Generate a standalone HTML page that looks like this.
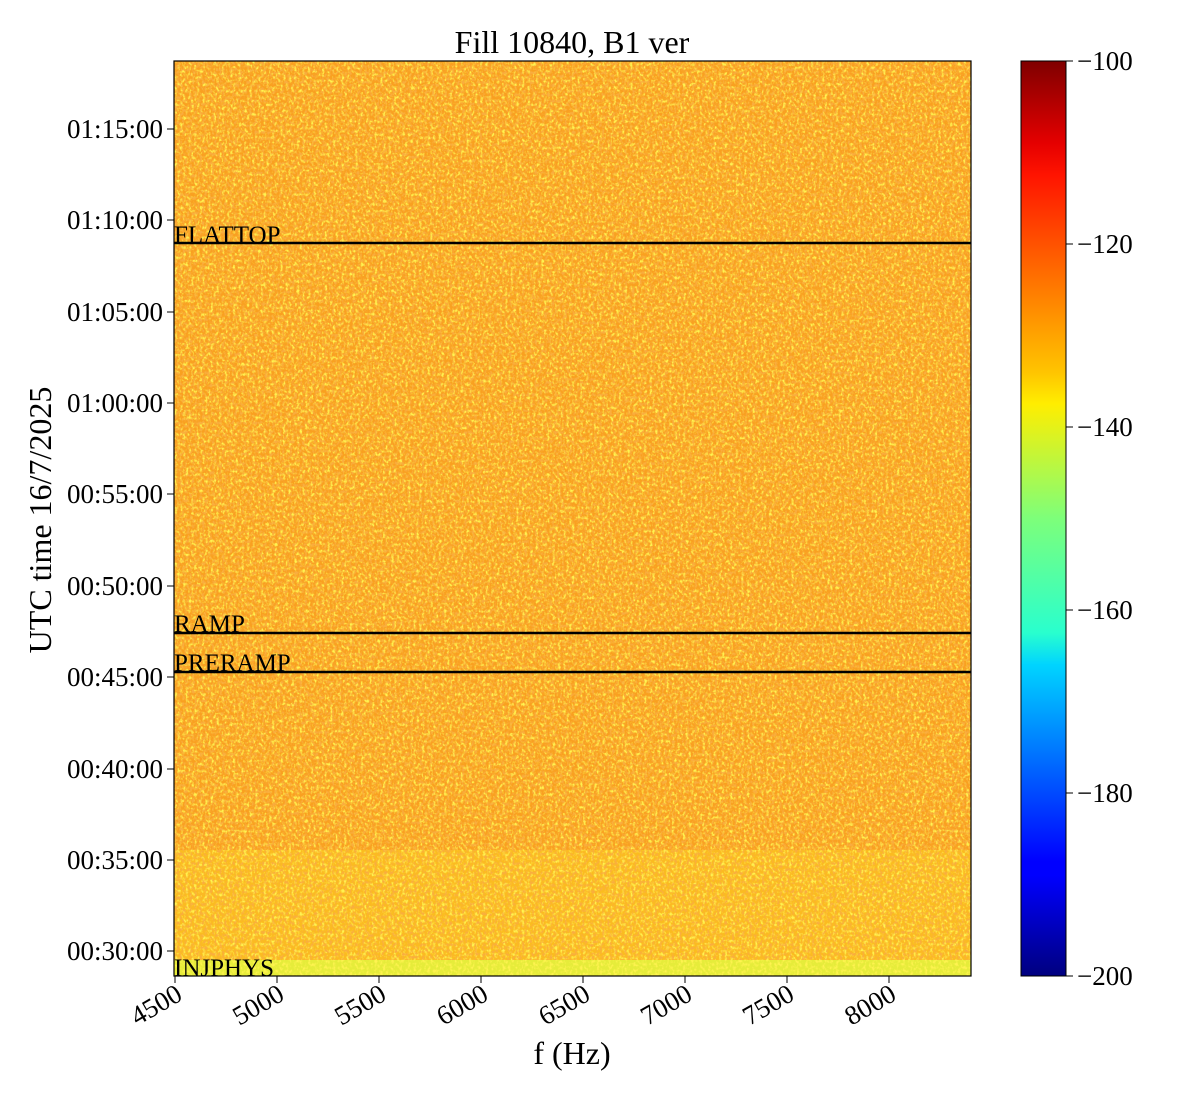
<!DOCTYPE html>
<html><head><meta charset="utf-8"><style>html,body{margin:0;padding:0;background:#fff}svg{display:block}</style></head>
<body>
<svg width="1200" height="1100" xmlns="http://www.w3.org/2000/svg" font-family="Liberation Serif, serif">
<defs>
<filter id="n" x="0" y="0" width="100%" height="100%">
<feTurbulence type="fractalNoise" baseFrequency="0.36 0.3" numOctaves="2" seed="3" result="t"/>
<feColorMatrix in="t" type="matrix" values="0 0 0 0 1  0 0 0 0 0.9  0 0 0 0 0.08  3.4 0 0 0 -1.55"/>
</filter>
<filter id="n2" x="0" y="0" width="100%" height="100%">
<feTurbulence type="fractalNoise" baseFrequency="0.4 0.32" numOctaves="2" seed="9" result="t"/>
<feColorMatrix in="t" type="matrix" values="0 0 0 0 0.95  0 0 0 0 0.42  0 0 0 0 0.05  0 3.6 0 0 -1.65"/>
</filter>
<linearGradient id="jet" x1="0" y1="1" x2="0" y2="0">
<stop offset="0" stop-color="#00007f"/><stop offset="0.11" stop-color="#0000ff"/>
<stop offset="0.125" stop-color="#0000ff"/><stop offset="0.34" stop-color="#00d4ff"/>
<stop offset="0.375" stop-color="#29ffce"/><stop offset="0.5" stop-color="#7dff7a"/>
<stop offset="0.625" stop-color="#ffee00"/><stop offset="0.66" stop-color="#ffc400"/>
<stop offset="0.75" stop-color="#ff7b00"/><stop offset="0.875" stop-color="#ff1400"/>
<stop offset="0.91" stop-color="#e50000"/><stop offset="1" stop-color="#7f0000"/>
</linearGradient>
</defs>
<text x="572" y="53" font-size="32" text-anchor="middle">Fill 10840, B1 ver</text>
<rect x="174" y="61" width="797" height="915" fill="#f9a020"/>
<rect x="174" y="850" width="797" height="110" fill="#fbbb20"/>
<rect x="174" y="960" width="797" height="16" fill="#e6ec3a"/>
<rect x="174" y="61" width="797" height="915" filter="url(#n)"/>
<rect x="174" y="61" width="797" height="899" filter="url(#n2)"/>
<rect x="174" y="61" width="797" height="915" fill="none" stroke="#000" stroke-width="1.2"/>
<g stroke="#000" stroke-width="2.5">
<line x1="174" y1="243" x2="971" y2="243"/><line x1="174" y1="633" x2="971" y2="633"/><line x1="174" y1="672" x2="971" y2="672"/>
</g>
<g font-size="25">
<text x="174" y="243">FLATTOP</text><text x="174" y="632">RAMP</text><text x="174" y="671">PRERAMP</text><text x="174" y="976">INJPHYS</text>
</g>
<g stroke="#000" stroke-width="1">
<line x1="167" y1="129" x2="174" y2="129"/><line x1="167" y1="220" x2="174" y2="220"/><line x1="167" y1="312" x2="174" y2="312"/><line x1="167" y1="403" x2="174" y2="403"/><line x1="167" y1="494" x2="174" y2="494"/><line x1="167" y1="586" x2="174" y2="586"/><line x1="167" y1="677" x2="174" y2="677"/><line x1="167" y1="769" x2="174" y2="769"/><line x1="167" y1="860" x2="174" y2="860"/><line x1="167" y1="951" x2="174" y2="951"/>
<line x1="175" y1="976" x2="175" y2="983"/><line x1="277" y1="976" x2="277" y2="983"/><line x1="379" y1="976" x2="379" y2="983"/><line x1="481" y1="976" x2="481" y2="983"/><line x1="583" y1="976" x2="583" y2="983"/><line x1="685" y1="976" x2="685" y2="983"/><line x1="787" y1="976" x2="787" y2="983"/><line x1="889" y1="976" x2="889" y2="983"/>
</g>
<g font-size="27" text-anchor="end">
<text x="163" y="138">01:15:00</text><text x="163" y="229">01:10:00</text><text x="163" y="321">01:05:00</text><text x="163" y="412">01:00:00</text><text x="163" y="503">00:55:00</text><text x="163" y="595">00:50:00</text><text x="163" y="686">00:45:00</text><text x="163" y="778">00:40:00</text><text x="163" y="869">00:35:00</text><text x="163" y="960">00:30:00</text>
</g>
<g font-size="27" text-anchor="end">
<text transform="translate(184,999) rotate(-30)">4500</text><text transform="translate(286,999) rotate(-30)">5000</text><text transform="translate(388,999) rotate(-30)">5500</text><text transform="translate(490,999) rotate(-30)">6000</text><text transform="translate(592,999) rotate(-30)">6500</text><text transform="translate(694,999) rotate(-30)">7000</text><text transform="translate(796,999) rotate(-30)">7500</text><text transform="translate(898,999) rotate(-30)">8000</text>
</g>
<text x="572" y="1064" font-size="32" text-anchor="middle">f (Hz)</text>
<text transform="translate(51,520) rotate(-90)" font-size="32" text-anchor="middle">UTC time 16/7/2025</text>
<rect x="1021" y="61" width="45" height="915" fill="url(#jet)" stroke="#000" stroke-width="1"/>
<g stroke="#000" stroke-width="1">
<line x1="1066" y1="61" x2="1073" y2="61"/><line x1="1066" y1="244" x2="1073" y2="244"/><line x1="1066" y1="427" x2="1073" y2="427"/><line x1="1066" y1="610" x2="1073" y2="610"/><line x1="1066" y1="793" x2="1073" y2="793"/><line x1="1066" y1="976" x2="1073" y2="976"/>
</g>
<g font-size="27">
<text x="1077" y="70">−100</text><text x="1077" y="253">−120</text><text x="1077" y="436">−140</text><text x="1077" y="619">−160</text><text x="1077" y="802">−180</text><text x="1077" y="985">−200</text>
</g>
</svg>
</body></html>
